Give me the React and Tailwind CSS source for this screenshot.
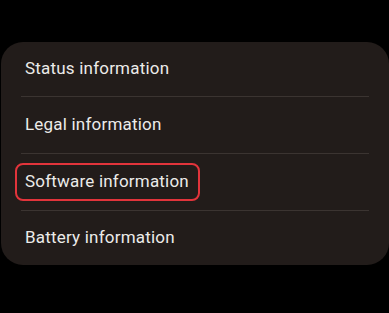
import React from 'react';

const items = [
  { label: 'Status information', h: 'h-[55px]' },
  { label: 'Legal information', h: 'h-[57px]' },
  { label: 'Software information', h: 'h-[57px]' },
  { label: 'Battery information', h: 'h-[54px]' },
];

export default function App() {
  return (
    <div className="w-[389px] h-[313px] bg-black pt-[42px] pl-[1px]" style={{ fontFamily: 'Roboto, "Noto Sans", sans-serif' }}>
      <div className="w-[388px] h-[223px] rounded-[22px] bg-[#221c1a] flex flex-col px-[20px]">
        {items.map((item, i) => (
          <div
            key={item.label}
            className={`${item.h} flex items-center ${i < items.length - 1 ? 'border-b border-[#3b3431]' : ''}`}
          >
            {item.label === 'Software information' ? (
              <span className="-ml-[6px] pl-[8px] pr-[9px] h-[38px] flex items-center rounded-[8px] border-2 border-[#e2343b] text-[17px] text-[#ecebe9] tracking-[0.2px]">
                {item.label}
              </span>
            ) : (
              <span className="pl-[4px] text-[17px] text-[#ecebe9] tracking-[0.2px]">{item.label}</span>
            )}
          </div>
        ))}
      </div>
    </div>
  );
}
